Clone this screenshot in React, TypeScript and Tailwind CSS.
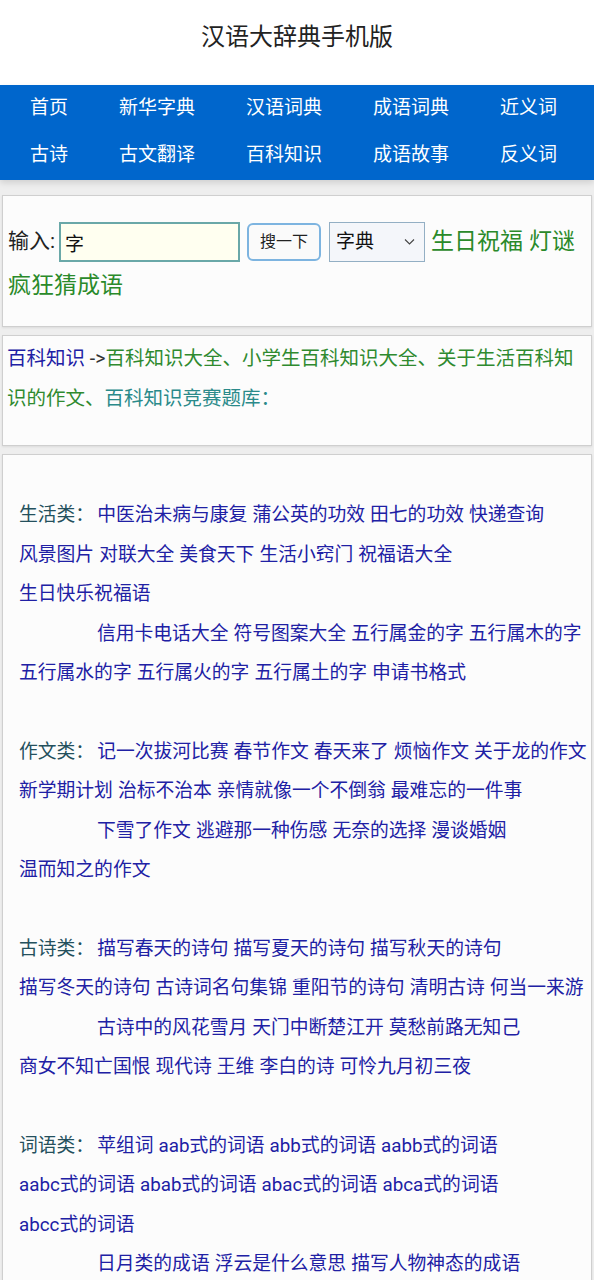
import React from 'react';

const navRows = [
  ['首页', '新华字典', '汉语词典', '成语词典', '近义词'],
  ['古诗', '古文翻译', '百科知识', '成语故事', '反义词'],
];

type Line = { label?: string; indent?: boolean; links: string[] };

const sections: Line[][] = [
  [
    { label: '生活类：', links: ['中医治未病与康复', '蒲公英的功效', '田七的功效', '快递查询'] },
    { links: ['风景图片', '对联大全', '美食天下', '生活小窍门', '祝福语大全'] },
    { links: ['生日快乐祝福语'] },
    { indent: true, links: ['信用卡电话大全', '符号图案大全', '五行属金的字', '五行属木的字'] },
    { links: ['五行属水的字', '五行属火的字', '五行属土的字', '申请书格式'] },
  ],
  [
    { label: '作文类：', links: ['记一次拔河比赛', '春节作文', '春天来了', '烦恼作文', '关于龙的作文'] },
    { links: ['新学期计划', '治标不治本', '亲情就像一个不倒翁', '最难忘的一件事'] },
    { indent: true, links: ['下雪了作文', '逃避那一种伤感', '无奈的选择', '漫谈婚姻'] },
    { links: ['温而知之的作文'] },
  ],
  [
    { label: '古诗类：', links: ['描写春天的诗句', '描写夏天的诗句', '描写秋天的诗句'] },
    { links: ['描写冬天的诗句', '古诗词名句集锦', '重阳节的诗句', '清明古诗', '何当一来游'] },
    { indent: true, links: ['古诗中的风花雪月', '天门中断楚江开', '莫愁前路无知己'] },
    { links: ['商女不知亡国恨', '现代诗', '王维', '李白的诗', '可怜九月初三夜'] },
  ],
  [
    { label: '词语类：', links: ['苹组词', 'aab式的词语', 'abb式的词语', 'aabb式的词语'] },
    { links: ['aabc式的词语', 'abab式的词语', 'abac式的词语', 'abca式的词语'] },
    { links: ['abcc式的词语'] },
    { indent: true, links: ['日月类的成语', '浮云是什么意思', '描写人物神态的成语'] },
    { links: ['成语接龙', '带数字的成语', '描写春天的成语'] },
  ],
];

const font = 'font-[Roboto,"Noto_Sans_CJK_SC",sans-serif]';

export default function App() {
  return (
    <div className={`min-h-screen bg-[#eeeeee] ${font}`}>
      <header className="h-[85px] bg-white pt-[20px] text-center">
        <h1 className="text-[24px] leading-[34px] text-[#222]">汉语大辞典手机版</h1>
      </header>

      <nav className="bg-[#0066cc] pb-[1px] shadow-[0_3px_6px_rgba(0,0,0,0.12)]">
        {navRows.map((row, i) => (
          <div key={i} className="flex h-[47px] items-center justify-between pl-[30px] pr-[37px]">
            {row.map((item) => (
              <a key={item} className="text-[19px] text-white">{item}</a>
            ))}
          </div>
        ))}
      </nav>

      <div className="mt-[15px] space-y-[8px] px-[2px]">
        <section className="border border-[#cfcfcf] bg-[#fcfcfc] px-[5px] pt-[26px] pb-[18px] shadow-[0_1px_2px_rgba(0,0,0,0.08)]">
          <div className="flex h-[40px] items-center">
            <span className="text-[21px] text-[#222]">输入:</span>
            <input
              defaultValue="字"
              className="ml-[4px] h-[40px] w-[181px] border-2 border-[#6aa8a8] bg-[#fffff0] px-[4px] text-[19px] text-[#111] outline-none"
            />
            <button className="ml-[7px] h-[38px] w-[74px] rounded-[6px] border-2 border-[#7db4e0] bg-[#fafafa] text-[16px] text-[#222]">
              搜一下
            </button>
            <div className="relative ml-[8px] h-[40px] w-[96px] border border-[#93afc4] bg-[#f4f6fa]">
              <span className="absolute left-[6px] top-0 text-[19px] leading-[38px] text-[#111]">字典</span>
              <svg className="absolute right-[9px] top-[15px]" width="11" height="8" viewBox="0 0 11 8">
                <path d="M1 1.5 L5.5 6 L10 1.5" fill="none" stroke="#444" strokeWidth="1.1" />
              </svg>
            </div>
            <a className="ml-[6px] text-[23px] text-[#2a8a2a]">生日祝福</a>
            <a className="ml-[6px] text-[23px] text-[#2a8a2a]">灯谜</a>
          </div>
          <div className="mt-[4px] leading-[40px]">
            <a className="text-[23px] text-[#2a8a2a]">疯狂猜成语</a>
          </div>
        </section>

        <section className="border border-[#cfcfcf] bg-[#fcfcfc] pl-[4px] pr-[10px] pt-[3px] pb-[26px] text-[19.5px] leading-[40px] shadow-[0_1px_2px_rgba(0,0,0,0.08)]">
          <a className="text-[#2020a4]">百科知识</a>
          <span className="text-[#333]"> -&gt;</span>
          <span className="text-[#2f8a2f]">百科知识大全、小学生百科知识大全、关于生活百科知识的作文、</span>
          <a className="text-[#2a8a8a]">百科知识竞赛题库：</a>
        </section>

        <section className="border border-[#cfcfcf] bg-[#fcfcfc] pl-[16px] pt-[2px] pb-[20px] text-[18.8px] leading-[39.4px] shadow-[0_1px_2px_rgba(0,0,0,0.08)]">
          {sections.map((lines, si) => (
            <div key={si}>
              <div className="h-[39.4px]" />
              {lines.map((line, li) => (
                <div key={li} className={`flex gap-[5px] whitespace-nowrap ${line.indent ? 'pl-[78px]' : ''}`}>
                  {line.label && <span className="-mr-[2px] text-[#24505c]">{line.label}</span>}
                  {line.links.map((l) => (
                    <a key={l} className="text-[#2020a4]">{l}</a>
                  ))}
                </div>
              ))}
            </div>
          ))}
        </section>
      </div>
    </div>
  );
}
